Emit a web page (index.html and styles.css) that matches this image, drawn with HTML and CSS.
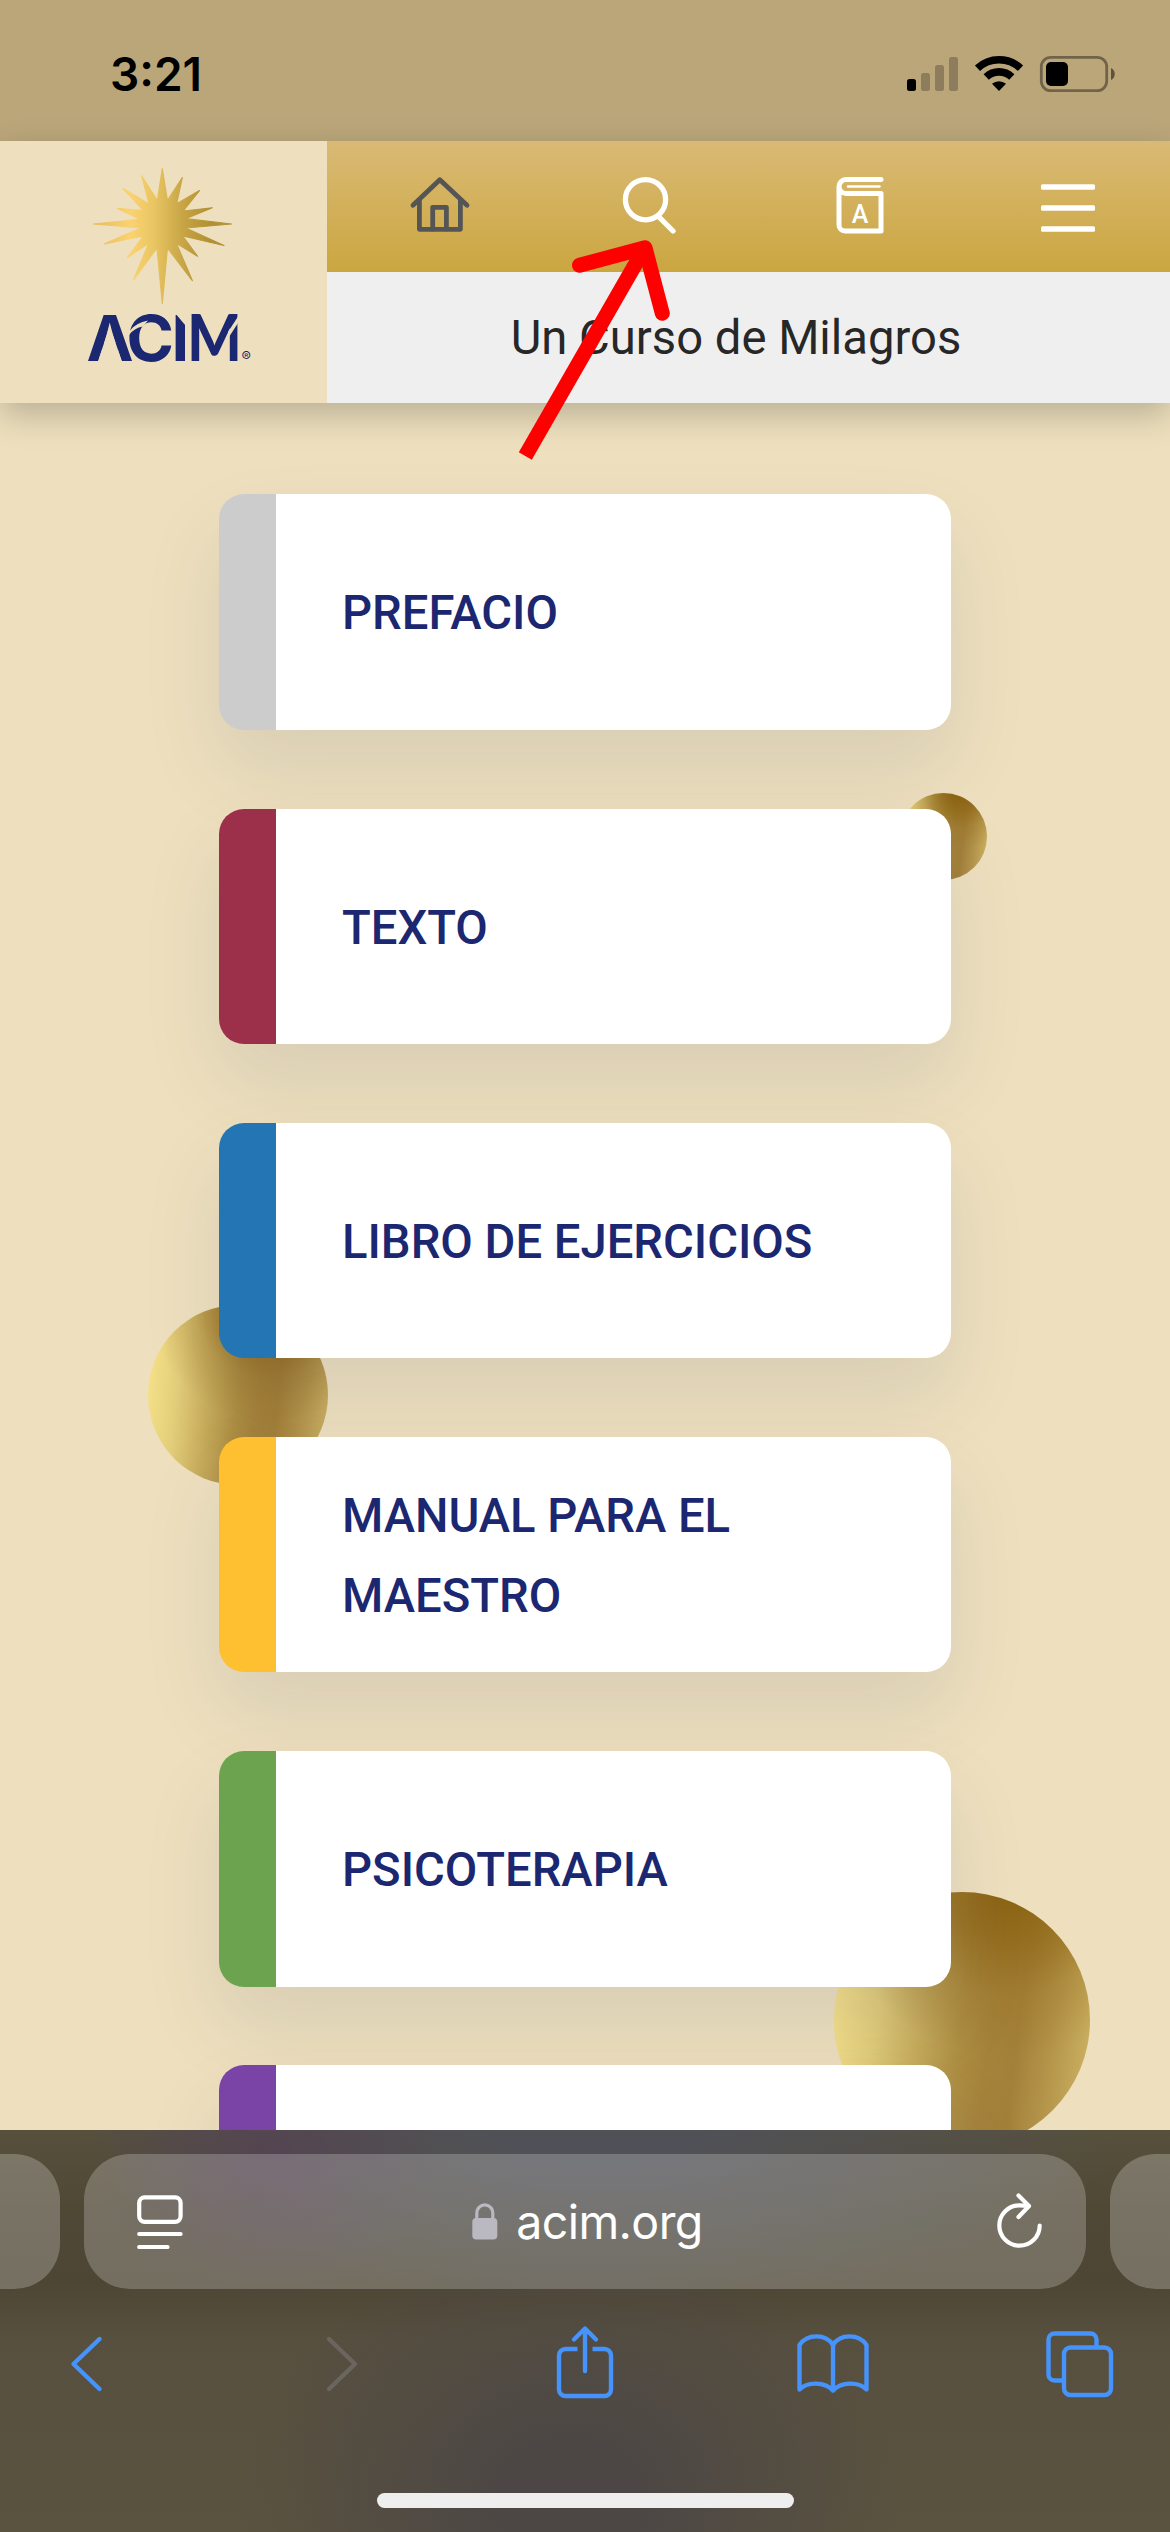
FILE: index.html
```html
<!DOCTYPE html>
<html lang="es">
	<head>
		<meta charset="UTF-8"/>
		<meta name="viewport" content="width=1170"/>
		<title>Un Curso de Milagros</title>
		<link rel="stylesheet" href="styles.css">
	</head>
	<body>
		<div class="status-bar">
			<span class="time">3:21</span>
			<svg class="status-icons" viewBox="0 0 208 40">
				<rect x="0" y="25" width="9" height="12" rx="2.5"/>
				<g opacity=".24">
					<rect x="14" y="19" width="9" height="18" rx="2.5"/>
					<rect x="28" y="11" width="9" height="26" rx="2.5"/>
					<rect x="42" y="3" width="9" height="34" rx="2.5"/>
				</g>
				<g fill="none" stroke="#000" stroke-width="7.6">
					<path d="M70.500 14.200a31.500 31.500 0 0 1 43 0"/>
					<path d="M79.200 23a18.600 18.600 0 0 1 25.600 0"/>
				</g>
				<path d="M92 37l-7-7.200a10.500 10.500 0 0 1 14 0z"/>
				<rect x="134.300" y="3.300" width="65.400" height="33.400" rx="9.500" fill="none" stroke="#000" stroke-opacity=".4" stroke-width="2.800"/>
				<rect x="139" y="8" width="22" height="24" rx="5"/>
				<path d="M204 14c5 2 5 10 0 12z" opacity=".5"/>
			</svg>
		</div>

		<header class="header">
			<a class="logo" href="#">
				<svg viewBox="0 141 327 262">
					<defs>
						<linearGradient id="sun" gradientUnits="userSpaceOnUse" x1="93" y1="0" x2="232" y2="0">
							<stop offset="0" stop-color="#e6bd5f"/>
							<stop offset=".27" stop-color="#fbd270"/>
							<stop offset=".43" stop-color="#eac763"/>
							<stop offset=".68" stop-color="#c3a040"/>
							<stop offset=".85" stop-color="#b09032"/>
							<stop offset="1" stop-color="#b5953a"/>
						</linearGradient>
					</defs>
					<path fill="url(#sun)" stroke="url(#sun)" stroke-width="1.200" stroke-linejoin="round" d="M162.300 168.500L167.400 200.500L182.300 177.500L176.700 203.700L199.500 190.600L183 211L212.300 207.800L185.700 218.700L231.500 224L185.700 228L224 245.500L182.700 236L197.600 256.300L176.400 243.300L192.400 280.700L167.400 248L162.300 303.500L157 248L133.800 279.300L148.700 243.300L127.500 257.400L143.300 236L104.600 243.900L140.700 228L93.500 224L140 219.300L117.600 208.400L143.300 210.700L123.200 188.500L149 204L141.700 175.800L157.300 200.500Z"/>
					<text class="wordmark" y="361"><tspan x="86.500">A</tspan><tspan x="126.500" textLength="47.500" lengthAdjust="spacingAndGlyphs">C</tspan><tspan x="171.500">I</tspan><tspan class="wordmark-m" x="187.200" textLength="54.500" lengthAdjust="spacingAndGlyphs">M</tspan></text>
					<g fill="#eee0be">
						<!-- cuts in the wordmark -->
						<path d="M109.700 326L97.800 362H122.200z"/>
						<path d="M127 334L130.500 330Q136 323 148 320.500L143 326.500Q134 328 129 335z"/>
						<path d="M175 313H188V328.500z"/>
						<path d="M240 313.500L228.300 331.500V338L240 320z"/>
					</g>
					<text class="registered" x="241.500" y="362">®</text>
				</svg>
			</a>
			<div class="header-main">
				<nav class="nav">
					<svg viewBox="0 0 64 63" fill="none" stroke="#555" stroke-width="4.800" stroke-linecap="round" stroke-linejoin="round">
						<path d="M5 30.300L31.800 4.800L59 30.300"/>
						<path d="M11.400 25.500V54.300H52.400V25.500"/>
						<path d="M24.700 54V32.300H38.400V54"/>
					</svg>
					<svg viewBox="0 0 64 63" fill="none" stroke="#fff" stroke-width="5.300" stroke-linecap="round">
						<circle cx="28.500" cy="24.700" r="20.100"/>
						<path d="M42.500 42.500L56 56"/>
					</svg>
					<svg viewBox="0 0 64 63" fill="none" stroke="#fff" stroke-width="5" stroke-linecap="round" stroke-linejoin="round">
						<path d="M54 4.600H19a7 7 0 0 0 0 14H54V56H18a6 6 0 0 1-6-6V12c0-4 3-7.400 7-7.400"/>
						<path stroke-width="2.400" d="M21 11.500H52.500"/>
						<text class="book-letter" x="33" y="48">A</text>
					</svg>
					<svg viewBox="0 0 64 63" fill="#fff">
						<rect x="5" y="9.200" width="54" height="5.600" rx="1.500"/>
						<rect x="5" y="30.200" width="54" height="5.600" rx="1.500"/>
						<rect x="5" y="51.200" width="54" height="5.600" rx="1.500"/>
					</svg>
				</nav>
				<h1 class="title">Un Curso de Milagros</h1>
			</div>
		</header>

		<main class="content">
			<span class="ball ball-small"></span>
			<span class="ball ball-medium"></span>
			<span class="ball ball-large"></span>
			<a class="card prefacio" href="#">PREFACIO</a>
			<a class="card texto" href="#">TEXTO</a>
			<a class="card ejercicios" href="#">LIBRO DE EJERCICIOS</a>
			<a class="card manual" href="#">MANUAL PARA EL MAESTRO</a>
			<a class="card psicoterapia" href="#">PSICOTERAPIA</a>
			<a class="card last" href="#"></a>
		</main>

		<footer class="browser">
			<div class="tab-row">
				<div class="tab-edge tab-edge-left"></div>
				<div class="address">
					<svg class="reader" viewBox="0 0 46 54" fill="none" stroke="#fff" stroke-width="4.200" stroke-linecap="round">
						<rect x="2.200" y="2.400" width="41.400" height="24.400" rx="5.500"/>
						<path d="M2.200 39H43.600M2.200 52H30.500"/>
					</svg>
					<span class="host">
						<svg viewBox="0 0 26 37">
							<rect x=".3" y="15" width="25" height="21.500" rx="4" fill="#bab8c0"/>
							<path d="M4.800 17V10.500C4.800-1 20.800-1 20.800 10.500V17" fill="none" stroke="#bab8c0" stroke-width="3.200"/>
						</svg>
						<span>acim.org</span>
					</span>
					<svg class="reload" viewBox="0 0 46 56" fill="none" stroke="#fff" stroke-width="4.200" stroke-linecap="round" stroke-linejoin="round">
						<path d="M42.700 33.500a20.200 20.200 0 1 1-20.200-20.200q4 0 9 .7"/>
						<path d="M21.500 3.400L32 14L21.500 25"/>
					</svg>
				</div>
				<div class="tab-edge tab-edge-right"></div>
			</div>
			<div class="toolbar">
				<svg viewBox="0 0 80 80">
					<path d="M49.500 15L23.500 40L49.500 65"/>
				</svg>
				<svg class="disabled" viewBox="0 0 80 80">
					<path d="M31 15L57 40L31 65"/>
				</svg>
				<svg viewBox="0 0 80 80">
					<path stroke-linecap="butt" d="M32.500 25H20.500a6.500 6.500 0 0 0-6.500 6.500V65.500a6.500 6.500 0 0 0 6.500 6.500H59.500a6.500 6.500 0 0 0 6.500-6.500V31.500a6.500 6.500 0 0 0-6.500-6.500H47.500"/>
					<path d="M40 47V5M29 15.500L40 4.500L51 15.500"/>
				</svg>
				<svg viewBox="0 0 80 80">
					<path d="M40 21V66.500M40 21C33 9.500 14 9.500 6.500 21V65.500C14 57.500 32 57.500 40 66.500C48 57.500 66 57.500 73.500 65.500V21C66 9.500 47 9.500 40 21"/>
				</svg>
				<svg viewBox="0 0 80 80">
					<rect x="24" y="23.500" width="47" height="47.500" rx="6.500"/>
					<path d="M56.500 23V15.500a6 6 0 0 0-6-6H14.500a6 6 0 0 0-6 6V50.500a6 6 0 0 0 6 6H23" stroke-linecap="butt"/>
				</svg>
			</div>
			<div class="home-indicator"></div>
		</footer>

		<!-- pointer to the search button -->
		<svg class="pointer" viewBox="0 0 160 230">
			<g fill="none" stroke="#f00" stroke-width="15">
				<path d="M15.300 216L133 11"/>
				<path stroke-linecap="round" stroke-linejoin="round" d="M69.500 25.300L135 7.700L152.300 73.300"/>
			</g>
		</svg>
	</body>
</html>
```

FILE: styles.css
```css
html, body {
	margin: 0;
	padding: 0;
	height: 2532px;
}

body {
	position: relative;
	display: flex;
	flex-direction: column;
	overflow: hidden;
	width: 1170px;
	background: #eee0be;
	font-family: Roboto, sans-serif;
}

svg {
	display: block;
}

a {
	text-decoration: none;
}

.status-bar {
	display: flex;
	flex: none;
	justify-content: space-between;
	box-sizing: border-box;
	height: 141px;
	padding: 54px 55px 0 110px;
	background: #bba67a;
}

.time {
	font: 600 46px/40px Inter, sans-serif;
}

.status-icons {
	width: 208px;
	height: 40px;
}

.header {
	position: relative;
	z-index: 2;
	display: flex;
	flex: none;
	height: 262px;
	box-shadow: 0 12px 32px rgba(0,0,0,0.22);
}

.logo {
	width: 327px;
	background: #eee0be;
}

.wordmark {
	font: 700 63px Inter, sans-serif;
	fill: #1b2770;
}

.wordmark-m {
	font: 900 64px Lato, sans-serif;
}

.registered {
	font: 14px Inter, sans-serif;
	fill: #1b2770;
}

.header-main {
	flex: 1;
}

.nav {
	display: flex;
	align-items: center;
	justify-content: space-between;
	height: 131px;
	padding: 0 70px 0 81px;
	background: linear-gradient(#d9ba75, #cba640);
}

.nav svg {
	width: 64px;
	height: 63px;
}

.book-letter {
	font: 500 25px Roboto, sans-serif;
	fill: #fff;
	stroke: none;
	text-anchor: middle;
}

.title {
	margin: 0;
	height: 131px;
	padding-right: 25px;
	background: #efefef;
	color: #272727;
	font-size: 47.2px;
	font-weight: 400;
	line-height: 132px;
	text-align: center;
}

.content {
	position: relative;
	display: flex;
	flex: 1;
	flex-direction: column;
	align-items: center;
	gap: 78.8px;
	min-height: 0;
	padding-top: 91.4px;
	overflow: hidden;
}

.card {
	position: relative;
	display: flex;
	flex: none;
	align-items: center;
	box-sizing: border-box;
	width: 732px;
	height: 235.4px;
	padding: 3px 66px 0;
	border-left: 57px solid;
	border-radius: 25px;
	background: white;
	box-shadow: 0 40px 80px rgba(27,39,100,0.1);
	color: #1b2770;
	font-size: 47.2px;
	font-weight: 500;
	line-height: 80.5px;
}

.prefacio { border-color: #ccc; }
.texto { border-color: #9c304b; }
.ejercicios { border-color: #2475b4; }
.manual { border-color: #fec031; }
.psicoterapia { border-color: #6ba34f; }
.last { border-color: #7944a6; }

.ball {
	position: absolute;
	border-radius: 50%;
	background:
		radial-gradient(circle at 68% -2%, #8a6113, rgba(144,104,24,0.75) 18%, rgba(152,112,34,0.3) 35%, rgba(160,120,40,0) 55%),
		linear-gradient(97deg, #f9e48c 2%, #e2cd7a 20%, #c6ab5b 36%, #ae8f43 50%, #a5833b 60%, #a38039 70%, #b5964b 83%, #d2b868);
}

.ball-small {
	left: 900px;
	top: 390px;
	width: 87px;
	height: 87px;
}

.ball-medium {
	left: 148px;
	top: 902px;
	width: 180px;
	height: 180px;
}

.ball-large {
	left: 834px;
	top: 1489px;
	width: 256px;
	height: 256px;
}

.browser {
	position: relative;
	z-index: 1;
	flex: none;
	box-sizing: border-box;
	height: 402px;
	padding-top: 24px;
	background:
		radial-gradient(ellipse 180px 150px at 270px 20px, rgba(83,60,90,0.55), rgba(83,60,90,0)),
		radial-gradient(ellipse 520px 170px at 600px 0, #505157 20%, rgba(80,81,87,0)),
		radial-gradient(ellipse 330px 260px at 570px 370px, #4c4745 20%, rgba(76,71,69,0)),
		linear-gradient(#57503c 0, #4f4835 20%, #4d4635 38%, #57503f 52%, #5a533f);
}

.tab-row {
	display: flex;
	gap: 24px;
	height: 135px;
}

.tab-edge {
	width: 60px;
	background: rgba(255,255,255,0.23);
}

.tab-edge-left {
	border-radius: 0 46px 46px 0;
}

.tab-edge-right {
	border-radius: 46px 0 0 46px;
}

.address {
	display: flex;
	flex: 1;
	align-items: center;
	justify-content: space-between;
	padding: 0 43px 0 53px;
	border-radius: 46px;
	background: rgba(255,255,255,0.22);
}

.reader {
	width: 46px;
	height: 54px;
}

.reload {
	width: 46px;
	height: 56px;
	margin-bottom: 4px;
}

.host {
	display: flex;
	align-items: center;
	gap: 18px;
	margin-right: 5px;
	color: white;
	font: 46.5px Inter, sans-serif;
	letter-spacing: -0.6px;
}

.host svg {
	width: 26px;
	height: 37px;
}

.toolbar {
	display: flex;
	justify-content: space-between;
	padding: 35px 50px 0;
}

.toolbar svg {
	width: 80px;
	height: 80px;
	fill: none;
	stroke: #4593fb;
	stroke-width: 4.4;
	stroke-linecap: round;
	stroke-linejoin: round;
}

.toolbar .disabled {
	stroke: #6a655e;
}

.home-indicator {
	width: 417px;
	height: 15px;
	margin: 89px auto 0;
	border-radius: 8px;
	background: #efeeee;
}

.pointer {
	position: absolute;
	z-index: 3;
	left: 510px;
	top: 240px;
	width: 160px;
	height: 230px;
}
```
